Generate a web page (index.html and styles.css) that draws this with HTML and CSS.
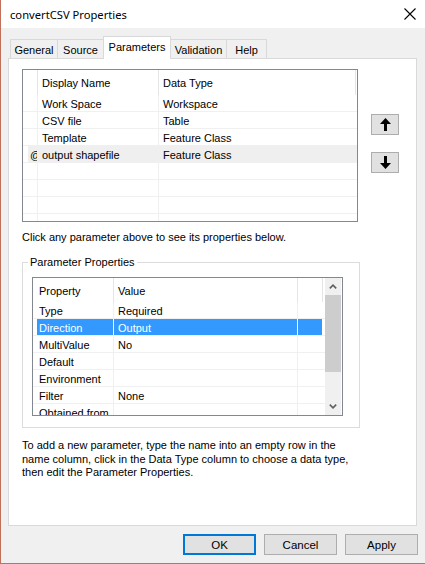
FILE: index.html
```html
<!DOCTYPE html>
<html>
<head>
<meta charset="utf-8">
<link rel="stylesheet" href="styles.css">
</head>
<body>
<div class="window">
  <div class="titlebar">
    <span class="title">convertCSV Properties</span>
    <svg class="close" width="12" height="12" viewBox="0 0 12 12"><path d="M0.5 0.5 L11.5 11.5 M11.5 0.5 L0.5 11.5" stroke="#000" stroke-width="1.1" fill="none"/></svg>
  </div>
  <div class="tabstrip">
    <div class="tab t-general">General</div>
    <div class="tab t-source">Source</div>
    <div class="tab t-params active">Parameters</div>
    <div class="tab t-valid">Validation</div>
    <div class="tab t-help">Help</div>
  </div>
  <div class="panel">
    <div class="top">
      <div class="list">
        <div class="lrow lhead"><div class="c0"></div><div class="c1">Display Name</div><div class="c2">Data Type</div><div class="c3"></div></div>
        <div class="lrow"><div class="c0"></div><div class="c1">Work Space</div><div class="c2">Workspace</div></div>
        <div class="lrow"><div class="c0"></div><div class="c1">CSV file</div><div class="c2">Table</div></div>
        <div class="lrow"><div class="c0"></div><div class="c1">Template</div><div class="c2">Feature Class</div></div>
        <div class="lrow cur"><div class="c0"><span class="mark">@</span></div><div class="c1">output shapefile</div><div class="c2">Feature Class</div></div>
        <div class="lrow"><div class="c0"></div><div class="c1"></div><div class="c2"></div></div>
        <div class="lrow"><div class="c0"></div><div class="c1"></div><div class="c2"></div></div>
        <div class="lrow"><div class="c0"></div><div class="c1"></div><div class="c2"></div></div>
        <div class="lrow"><div class="c0"></div><div class="c1"></div><div class="c2"></div></div>
      </div>
      <div class="movers">
        <button class="mv up"><svg width="11" height="13" viewBox="0 0 11 13"><path d="M5.5 0 L11 6 H7 V13 H4 V6 H0 Z" fill="#000"/></svg></button>
        <button class="mv down"><svg width="11" height="13" viewBox="0 0 11 13"><path d="M5.5 13 L11 7 H7 V0 H4 V7 H0 Z" fill="#000"/></svg></button>
      </div>
    </div>
    <p class="hint">Click any parameter above to see its properties below.</p>
    <div class="group">
      <div class="legend">Parameter Properties</div>
      <div class="props">
        <div class="pgrid">
          <div class="prow phead"><div class="p0"></div><div class="p1">Property</div><div class="p2">Value</div><div class="p3"></div><div class="p4"></div></div>
          <div class="prow"><div class="p0"></div><div class="p1">Type</div><div class="p2">Required</div><div class="p3"></div><div class="p4"></div></div>
          <div class="prow sel"><div class="p0"></div><div class="p1">Direction</div><div class="p2">Output</div><div class="p3"></div><div class="p4"></div></div>
          <div class="prow"><div class="p0"></div><div class="p1">MultiValue</div><div class="p2">No</div><div class="p3"></div><div class="p4"></div></div>
          <div class="prow"><div class="p0"></div><div class="p1">Default</div><div class="p2"></div><div class="p3"></div><div class="p4"></div></div>
          <div class="prow"><div class="p0"></div><div class="p1">Environment</div><div class="p2"></div><div class="p3"></div><div class="p4"></div></div>
          <div class="prow"><div class="p0"></div><div class="p1">Filter</div><div class="p2">None</div><div class="p3"></div><div class="p4"></div></div>
          <div class="prow"><div class="p0"></div><div class="p1">Obtained from</div><div class="p2"></div><div class="p3"></div><div class="p4"></div></div>
        </div>
        <div class="vscroll">
          <div class="sb-btn"><svg width="8" height="5" viewBox="0 0 8 5"><path d="M0.8 4.4 L4 1.2 L7.2 4.4" stroke="#606060" stroke-width="1.6" fill="none"/></svg></div>
          <div class="thumb"></div>
          <div class="track"></div>
          <div class="sb-btn"><svg width="8" height="5" viewBox="0 0 8 5"><path d="M0.8 0.6 L4 3.8 L7.2 0.6" stroke="#606060" stroke-width="1.6" fill="none"/></svg></div>
        </div>
      </div>
    </div>
    <p class="note">To add a new parameter, type the name into an empty row in the<br>name column, click in the Data Type column to choose a data type,<br>then edit the Parameter Properties.</p>
  </div>
  <div class="buttons">
    <button class="btn default">OK</button>
    <button class="btn">Cancel</button>
    <button class="btn">Apply</button>
  </div>
</div>
</body>
</html>
```
FILE: styles.css
```css
html, body {
  margin: 0;
  padding: 0;
  background: #f0f0f0;
}
body {
  font-family: "Liberation Sans", Arial, sans-serif;
  font-size: 11px;
  color: #000;
}
.window {
  width: 424px;
  height: 563px;
  border-left: 1px solid #c1705c;
  border-bottom: 1px solid #c1705c;
  background: #f0f0f0;
  display: flex;
  flex-direction: column;
}
.titlebar {
  height: 28px;
  flex: none;
  background: #fff;
  display: flex;
  align-items: center;
  justify-content: space-between;
  padding: 0 9px;
  box-sizing: border-box;
}
.title {
  font-family: "Noto Sans", sans-serif;
  font-size: 11.2px;
}
.close { display: block; }

.tabstrip {
  height: 30px;
  flex: none;
  display: flex;
  align-items: flex-end;
  padding-left: 9px;
  box-sizing: border-box;
}
.tab {
  height: 19px;
  box-sizing: border-box;
  border: 1px solid #d9d9d9;
  border-bottom: none;
  margin-left: -1px;
  display: flex;
  align-items: center;
  justify-content: center;
  background: #f0f0f0;
  font-size: 11px;
  padding-top: 1px;
}
.t-general { margin-left: 0; width: 48px; }
.t-source { width: 47px; }
.t-params { width: 68px; }
.t-valid { width: 57px; }
.t-help { width: 41px; }
.tab.active {
  height: 23px;
  margin-bottom: -1px;
  background: #fff;
  position: relative;
  z-index: 1;
  padding-top: 0;
  padding-bottom: 2px;
}

.panel {
  flex: none;
  margin: 0 8px 0 7px;
  height: 468px;
  box-sizing: border-box;
  background: #fff;
  border: 1px solid #d9d9d9;
  padding: 10px 0 0 13px;
}
.top {
  display: flex;
  align-items: flex-start;
}
.list {
  width: 336px;
  height: 153px;
  box-sizing: border-box;
  border: 1px solid #828790;
  overflow: hidden;
  background: #fff;
}
.lrow {
  display: flex;
  height: 17px;
  box-sizing: border-box;
  border-bottom: 1px solid #f0f0f0;
}
.lrow.lhead {
  height: 25px;
  border-bottom: none;
}
.lrow > div {
  box-sizing: border-box;
  display: flex;
  align-items: center;
  white-space: nowrap;
  overflow: hidden;
  padding-top: 1px;
}
.c0 { width: 15px; flex: none; border-right: 1px solid #f0f0f0; }
.c1 { width: 121px; flex: none; padding-left: 4px; border-right: 1px solid #f0f0f0; }
.c2 { flex: 1; padding-left: 4px; }
.lhead .c0, .lhead .c1 { border-right-color: #e5e5e5; }
.lhead .c2 { flex: none; width: 197px; border-right: 1px solid #e5e5e5; }
.lhead .c3 { flex: 1; }
.lrow.cur .c1, .lrow.cur .c2 { background: #efefef; }
.lrow.cur .c0 { background: linear-gradient(to right, #fff 5px, #efefef 5px); }
.mark { padding-left: 7px; }

.movers {
  display: flex;
  flex-direction: column;
  margin-left: 13px;
  padding-top: 45px;
}
.mv {
  width: 28px;
  height: 21px;
  box-sizing: border-box;
  border: 1px solid #adadad;
  background: #e1e1e1;
  padding: 0;
  margin: 0;
  display: flex;
  align-items: center;
  justify-content: center;
}
.mv svg { display: block; }
.mv.down { margin-top: 17px; }

.hint {
  margin: 8px 0 0;
  line-height: 14px;
}
.group {
  width: 338px;
  box-sizing: border-box;
  border: 1px solid #dcdcdc;
  margin-top: 18px;
  padding: 0 0 11px 0;
}
.legend {
  margin: -8px 0 0 5px;
  padding: 0 2px;
  background: #fff;
  width: max-content;
  line-height: 14px;
}
.props {
  display: flex;
  width: 311px;
  height: 139px;
  box-sizing: border-box;
  border: 1px solid #828790;
  margin: 8px 0 0 9px;
  background: #fff;
}
.pgrid {
  width: 292px;
  flex: none;
  overflow: hidden;
}
.prow {
  display: flex;
  height: 17px;
  box-sizing: border-box;
  border-bottom: 1px solid #f0f0f0;
}
.prow.phead {
  height: 24px;
  border-bottom: none;
}
.prow > div {
  box-sizing: border-box;
  display: flex;
  align-items: center;
  white-space: nowrap;
  overflow: hidden;
  flex: none;
  padding-top: 1px;
}
.p0 { width: 4px; }
.p1 { width: 77px; padding-left: 2px; border-right: 1px solid #f0f0f0; }
.p2 { width: 184px; padding-left: 4px; border-right: 1px solid #f0f0f0; }
.p3 { width: 25px; }
.prow > .p4 { flex: 1; }
.phead .p1, .phead .p2 { border-right-color: #e5e5e5; }
.phead .p3 { border-right: 1px solid #e5e5e5; }
.prow.sel .p1, .prow.sel .p2 {
  background: #3399ff;
  color: #fff;
  border-right-color: #fff;
}
.prow.sel .p3 {
  width: 24px;
  background: #3399ff;
}
.vscroll {
  width: 16px;
  flex: none;
  margin-right: 1px;
  background: #f0f0f0;
  display: flex;
  flex-direction: column;
}
.sb-btn {
  height: 17px;
  flex: none;
  display: flex;
  align-items: center;
  justify-content: center;
}
.sb-btn svg { display: block; }
.thumb {
  height: 77px;
  flex: none;
  background: #cdcdcd;
}
.track { flex: 1; }

.note {
  margin: 11px 0 0;
  line-height: 13.5px;
  white-space: nowrap;
}

.buttons {
  flex: none;
  display: flex;
  justify-content: flex-end;
  gap: 8px;
  padding: 8px 7px 0 0;
}
.btn {
  width: 73px;
  height: 21px;
  box-sizing: border-box;
  border: 1px solid #adadad;
  background: #e1e1e1;
  font-family: "Liberation Sans", Arial, sans-serif;
  font-size: 11.5px;
  color: #000;
  padding: 0;
  margin: 0;
}
.btn.default {
  border: 2px solid #0078d7;
}
```
